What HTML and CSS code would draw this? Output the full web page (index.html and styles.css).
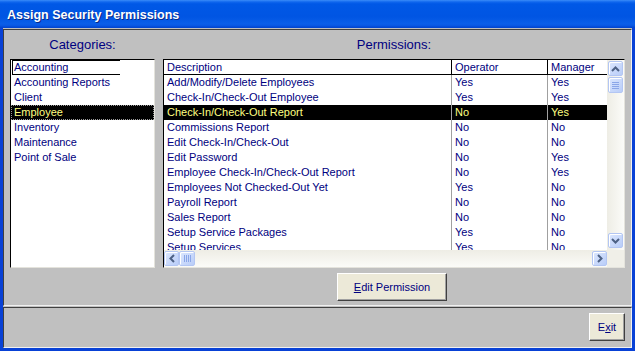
FILE: index.html
```html
<!DOCTYPE html>
<html>
<head>
    <title>Assign Security Permissions</title>
    <link rel="stylesheet" href="styles.css">
</head>
<body>
    <div class="window">
        <div class="titlebar">
            <span class="title">Assign Security Permissions</span>
        </div>
        <div class="client">
            <div class="panel panel-main">
                <div class="label">Categories:</div>
                <div class="label">Permissions:</div>

                <div class="listbox">
                    <div class="item"><span class="focus-box">Accounting</span></div>
                    <div class="item">Accounting Reports</div>
                    <div class="item">Client</div>
                    <div class="item selected">Employee</div>
                    <div class="item">Inventory</div>
                    <div class="item">Maintenance</div>
                    <div class="item">Point of Sale</div>
                </div>

                <div class="grid">
                    <div class="grid-view">
                        <div class="row head">
                            <div class="cell c-desc">Description</div>
                            <div class="cell c-op">Operator</div>
                            <div class="cell c-man">Manager</div>
                        </div>
                        <div class="row"><div class="cell c-desc">Add/Modify/Delete Employees</div><div class="cell c-op">Yes</div><div class="cell c-man">Yes</div></div>
                        <div class="row"><div class="cell c-desc">Check-In/Check-Out Employee</div><div class="cell c-op">Yes</div><div class="cell c-man">Yes</div></div>
                        <div class="row selected"><div class="cell c-desc">Check-In/Check-Out Report</div><div class="cell c-op">No</div><div class="cell c-man">Yes</div></div>
                        <div class="row"><div class="cell c-desc">Commissions Report</div><div class="cell c-op">No</div><div class="cell c-man">No</div></div>
                        <div class="row"><div class="cell c-desc">Edit Check-In/Check-Out</div><div class="cell c-op">No</div><div class="cell c-man">No</div></div>
                        <div class="row"><div class="cell c-desc">Edit Password</div><div class="cell c-op">No</div><div class="cell c-man">Yes</div></div>
                        <div class="row"><div class="cell c-desc">Employee Check-In/Check-Out Report</div><div class="cell c-op">No</div><div class="cell c-man">Yes</div></div>
                        <div class="row"><div class="cell c-desc">Employees Not Checked-Out Yet</div><div class="cell c-op">Yes</div><div class="cell c-man">No</div></div>
                        <div class="row"><div class="cell c-desc">Payroll Report</div><div class="cell c-op">No</div><div class="cell c-man">No</div></div>
                        <div class="row"><div class="cell c-desc">Sales Report</div><div class="cell c-op">No</div><div class="cell c-man">No</div></div>
                        <div class="row"><div class="cell c-desc">Setup Service Packages</div><div class="cell c-op">Yes</div><div class="cell c-man">No</div></div>
                        <div class="row"><div class="cell c-desc">Setup Services</div><div class="cell c-op">Yes</div><div class="cell c-man">No</div></div>
                    </div>

                    <div class="vscroll">
                        <div class="sb-btn">
                            <svg width="9" height="6" viewBox="0 0 9 6"><path d="M1 5 L4.5 1.5 L8 5" fill="none" stroke="#4d6185" stroke-width="2"/></svg>
                        </div>
                        <div class="sb-thumb v-thumb">
                            <span></span><span></span><span></span><span></span>
                        </div>
                        <div class="sb-track"></div>
                        <div class="sb-btn">
                            <svg width="9" height="6" viewBox="0 0 9 6"><path d="M1 1 L4.5 4.5 L8 1" fill="none" stroke="#4d6185" stroke-width="2"/></svg>
                        </div>
                    </div>

                    <div class="hscroll">
                        <div class="sb-btn">
                            <svg width="6" height="9" viewBox="0 0 6 9"><path d="M5 1 L1.5 4.5 L5 8" fill="none" stroke="#4d6185" stroke-width="2"/></svg>
                        </div>
                        <div class="sb-thumb h-thumb">
                            <span></span><span></span><span></span><span></span>
                        </div>
                        <div class="sb-track"></div>
                        <div class="sb-btn">
                            <svg width="6" height="9" viewBox="0 0 6 9"><path d="M1 1 L4.5 4.5 L1 8" fill="none" stroke="#4d6185" stroke-width="2"/></svg>
                        </div>
                    </div>
                    <div class="corner"></div>
                </div>

                <div></div>
                <div class="button-row">
                    <button class="btn btn-edit"><u>E</u>dit Permission</button>
                </div>
            </div>

            <div class="panel panel-footer">
                <button class="btn btn-exit">E<u>x</u>it</button>
            </div>
        </div>
    </div>
</body>
</html>
```

FILE: styles.css
```css
* {
    box-sizing: border-box;
}
body {
    margin: 0;
    width: 635px;
    height: 351px;
    overflow: hidden;
    font-family: "Liberation Sans", Arial, sans-serif;
    font-size: 11px;
    color: #000080;
}
.window {
    width: 635px;
    height: 351px;
    background: #0841d6;
    padding: 0 3px 3px 3px;
    display: flex;
    flex-direction: column;
}
.titlebar {
    height: 28px;
    margin: 0 -3px;
    padding-left: 7px;
    display: flex;
    align-items: center;
    background: linear-gradient(#3a8cf8 0%, #1067ee 7%, #0058e6 14%, #0055e3 60%, #0a5ee8 84%, #0a5ae6 90%, #0042cc 100%);
}
.title {
    color: white;
    font-weight: bold;
    font-size: 12.5px;
    text-shadow: 1px 1px 0 #0a2a8a;
    margin-top: 1px;
}
.client {
    flex: 1;
    background: #c0c0c0;
    padding-top: 1px;
    display: flex;
    flex-direction: column;
}
.panel {
    border-top: 1px solid #404040;
    border-left: 1px solid #404040;
    border-right: 1px solid #f0f0f0;
    border-bottom: 1px solid #f0f0f0;
}
.panel-main {
    height: 277px;
    display: grid;
    grid-template-columns: 145px 462px;
    grid-template-rows: 29px 209px auto;
    column-gap: 8px;
    padding: 0 6px 4px 6px;
}
.label {
    font-size: 13px;
    line-height: 15px;
    padding-top: 7px;
    text-align: center;
}
.listbox {
    background: white;
    border-top: 1px solid #000;
    border-left: 1px solid #000;
    border-right: 1px solid #e4e3dc;
    border-bottom: 1px solid #e4e3dc;
}
.item {
    height: 15px;
    line-height: 15px;
    padding-left: 3px;
    white-space: nowrap;
}
.focus-box {
    display: block;
    width: 108px;
    height: 15px;
    margin-left: -2px;
    padding-left: 1px;
    line-height: 13px;
    border-top: 1px solid #000;
    border-left: 1px solid #000;
    border-bottom: 1px solid #000;
}
.item.selected {
    background: #000;
    color: #ffff80;
    border: 1px dotted #9a9a9a;
    line-height: 13px;
    padding-left: 2px;
}
.grid {
    background: white;
    border-top: 1px solid #000;
    border-left: 1px solid #000;
    border-right: 1px solid #e4e3dc;
    border-bottom: 1px solid #e4e3dc;
    display: grid;
    grid-template-columns: 443px 17px;
    grid-template-rows: 190px 17px;
    overflow: hidden;
}
.grid-view {
    overflow: hidden;
}
.row {
    display: flex;
    height: 15px;
    line-height: 15px;
    white-space: nowrap;
}
.row.head {
    border-bottom: 1px solid #000;
    line-height: 14px;
}
.cell {
    flex: none;
    padding-left: 3px;
    border-right: 1px solid #a0a0a0;
    overflow: hidden;
}
.row.head .cell {
    border-right-color: #000;
}
.c-desc {
    width: 288px;
}
.c-op {
    width: 96px;
}
.c-man {
    width: 110px;
}
.row.selected {
    background: #000;
    color: #ffff80;
}
.vscroll {
    display: flex;
    flex-direction: column;
    background: linear-gradient(to right, #eeede5, #fbfbf8);
    padding: 1px 1px 2px 1px;
}
.hscroll {
    display: flex;
    background: linear-gradient(#eeede5, #fbfbf8);
    padding: 1px 0;
}
.corner {
    background: #f0efe8;
}
.sb-track {
    flex: 1;
}
.sb-btn,
.sb-thumb {
    width: 15px;
    height: 15px;
    flex: none;
    border: 1px solid #b3c6f3;
    border-radius: 2px;
    background: linear-gradient(135deg, #dce7fe, #b9cdf8);
    box-shadow: inset 1px 1px 0 #ffffff;
    display: flex;
    align-items: center;
    justify-content: center;
}
.v-thumb {
    height: 16px;
    margin-top: 1px;
    flex-direction: column;
    gap: 1px;
}
.v-thumb span {
    width: 7px;
    height: 1px;
    background: #8aa6e8;
}
.h-thumb {
    width: 16px;
    gap: 1px;
}
.h-thumb span {
    width: 1px;
    height: 7px;
    background: #8aa6e8;
}
.button-row {
    margin-top: 5px;
    display: flex;
    justify-content: center;
    padding-right: 4px;
}
.btn {
    font-family: "Liberation Sans", Arial, sans-serif;
    font-size: 11px;
    color: #000080;
    background: #ece9d8;
    height: 28px;
    padding: 0;
    border-top: 1px solid #ffffff;
    border-left: 1px solid #ffffff;
    border-right: 1px solid #404040;
    border-bottom: 1px solid #404040;
    box-shadow: inset -1px -1px 0 #a0a0a0;
}
.btn-edit {
    width: 110px;
}
.panel-footer {
    margin-top: 1px;
    height: 41px;
    display: flex;
    justify-content: flex-end;
    align-items: flex-start;
    padding: 5px 6px 0 0;
}
.btn-exit {
    width: 36px;
}
```
